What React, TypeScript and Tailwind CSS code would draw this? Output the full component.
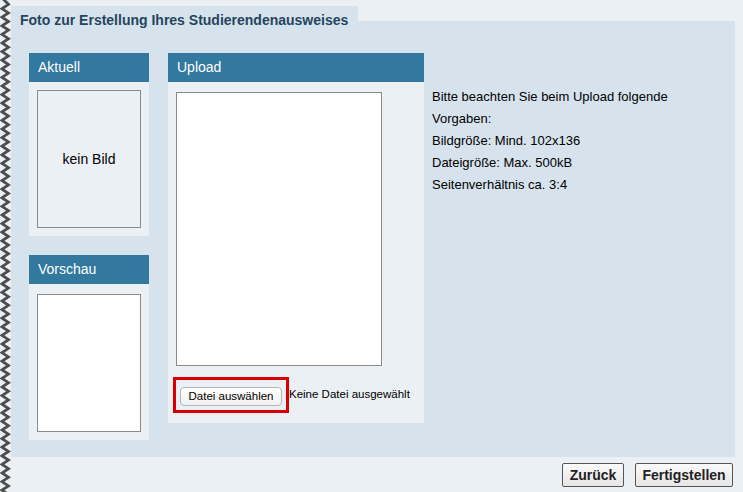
import React from "react";

function Zigzag() {
  const period = 8.6;
  let d = "M2 -2";
  for (let y = 0; y < 500; y += period) {
    d += ` L8.5 ${(y + period / 2).toFixed(2)} L2 ${(y + period).toFixed(2)}`;
  }
  return (
    <svg width="11" height="492" className="block shrink-0">
      <path d={d} fill="none" stroke="#4d4d4d" strokeWidth="2.8" strokeLinejoin="miter" strokeMiterlimit="10" />
    </svg>
  );
}

function BoxHeader({ children }: { children: React.ReactNode }) {
  return (
    <div className="h-[29px] bg-[#33789f] text-white text-[14px] leading-[29px] pl-[9px]">{children}</div>
  );
}

export default function App() {
  return (
    <div
      className="w-[743px] h-[492px] bg-[#ebf0f4] flex overflow-hidden"
      style={{ fontFamily: '"Liberation Sans", Arial, sans-serif' }}
    >
      <Zigzag />
      <div className="flex flex-col w-[724px] pt-[6px]">
        <div className="w-[347px] h-[15px] bg-[#d6e3ed] pl-[9px]">
          <div className="relative z-10 pt-[6px] text-[14px] leading-[17px] font-bold text-[#26445e] whitespace-nowrap">
            Foto zur Erstellung Ihres Studierendenausweises
          </div>
        </div>
        <div className="h-[436px] bg-[#d6e3ed] flex pl-[18px] pt-[32px]">
          <div className="flex flex-col w-[120px] gap-[19px]">
            <div className="bg-[#ebf0f4]">
              <BoxHeader>Aktuell</BoxHeader>
              <div className="p-[8px]">
                <div className="w-[104px] h-[138px] border border-[#8a8a8a] flex items-center justify-center text-[14px] text-black">
                  kein Bild
                </div>
              </div>
            </div>
            <div className="bg-[#ebf0f4]">
              <BoxHeader>Vorschau</BoxHeader>
              <div className="pt-[10px] pb-[8px] px-[8px]">
                <div className="w-[104px] h-[138px] border border-[#8a8a8a] bg-white" />
              </div>
            </div>
          </div>
          <div className="ml-[19px] w-[256px] self-start bg-[#ebf0f4]">
            <BoxHeader>Upload</BoxHeader>
            <div className="pt-[10px] pl-[8px] pb-[10px]">
              <div className="w-[206px] h-[274px] border border-[#8a8a8a] bg-white" />
              <div className="flex items-center mt-[11px] -ml-[3px]">
                <div className="border-[3px] border-[#d80000] px-[4px] py-[3px]">
                  <button className="h-[19px] w-[102px] rounded-[4px] border border-[#b5b5b5] bg-gradient-to-b from-white to-[#f1f1f1] text-[11.5px] leading-[17px] text-black">
                    Datei auswählen
                  </button>
                </div>
                <span className="text-[11.5px] text-black whitespace-nowrap">Keine Datei ausgewählt</span>
              </div>
            </div>
          </div>
          <div className="ml-[8px] pt-[33px] text-[13px] leading-[22px] text-black">
            <div>Bitte beachten Sie beim Upload folgende</div>
            <div>Vorgaben:</div>
            <div>Bildgröße: Mind. 102x136</div>
            <div>Dateigröße: Max. 500kB</div>
            <div>Seitenverhältnis ca. 3:4</div>
          </div>
        </div>
        <div className="flex justify-end gap-[11px] mt-[6px] w-[722px]">
          <button className="h-[24px] w-[62px] border border-[#555] rounded-[2px] bg-gradient-to-b from-[#fafafa] to-[#e6e6e6] text-[14px] font-bold text-[#222]">
            Zurück
          </button>
          <button className="h-[24px] w-[98px] border border-[#555] rounded-[2px] bg-gradient-to-b from-[#fafafa] to-[#e6e6e6] text-[14px] font-bold text-[#222]">
            Fertigstellen
          </button>
        </div>
      </div>
    </div>
  );
}
